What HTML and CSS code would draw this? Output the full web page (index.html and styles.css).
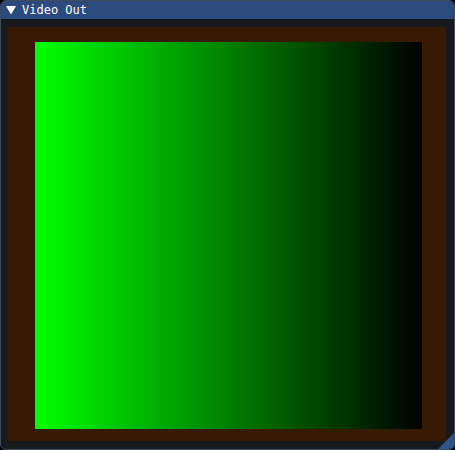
FILE: index.html
```html
<!DOCTYPE html>
<html>
<head>
<meta charset="utf-8">
<link rel="stylesheet" href="styles.css">
</head>
<body>
<div class="window">
  <div class="titlebar">
    <svg class="arrow" width="10" height="10" viewBox="0 0 10 10"><polygon points="0,1 10,1 5,9.5" fill="#ffffff"/></svg>
    <span class="title">Video Out</span>
  </div>
  <div class="content">
    <div class="frame">
      <div class="image"></div>
    </div>
  </div>
  <svg class="grip" width="16" height="16" viewBox="0 0 16 16"><polygon points="16,0 16,16 0,16" fill="#2f5487"/></svg>
</div>
</body>
</html>
```
FILE: styles.css
```css
html, body {
  margin: 0;
  padding: 0;
  background: #000;
}
.window {
  position: relative;
  width: 455px;
  height: 450px;
  box-sizing: border-box;
  border: 1px solid #3f4a5c;
  border-radius: 6px;
  background: #161a1f;
  overflow: hidden;
  display: flex;
  flex-direction: column;
}
.titlebar {
  height: 18px;
  flex: none;
  background: #2c4a7c;
  display: flex;
  align-items: center;
  padding-left: 5px;
  gap: 6px;
}
.arrow {
  display: block;
}
.title {
  font-family: "DejaVu Sans Mono", monospace;
  font-size: 12px;
  color: #ffffff;
}
.content {
  flex: 1;
  padding: 8px 7px 8px 7px;
  display: flex;
}
.frame {
  width: 438px;
  height: 414px;
  background: #361b02;
  box-sizing: border-box;
  padding: 15px 0 0 27px;
}
.image {
  width: 387px;
  height: 387px;
  background: linear-gradient(to right, #00ff00, #000000);
}
.grip {
  position: absolute;
  right: 0;
  bottom: 0;
}
```
